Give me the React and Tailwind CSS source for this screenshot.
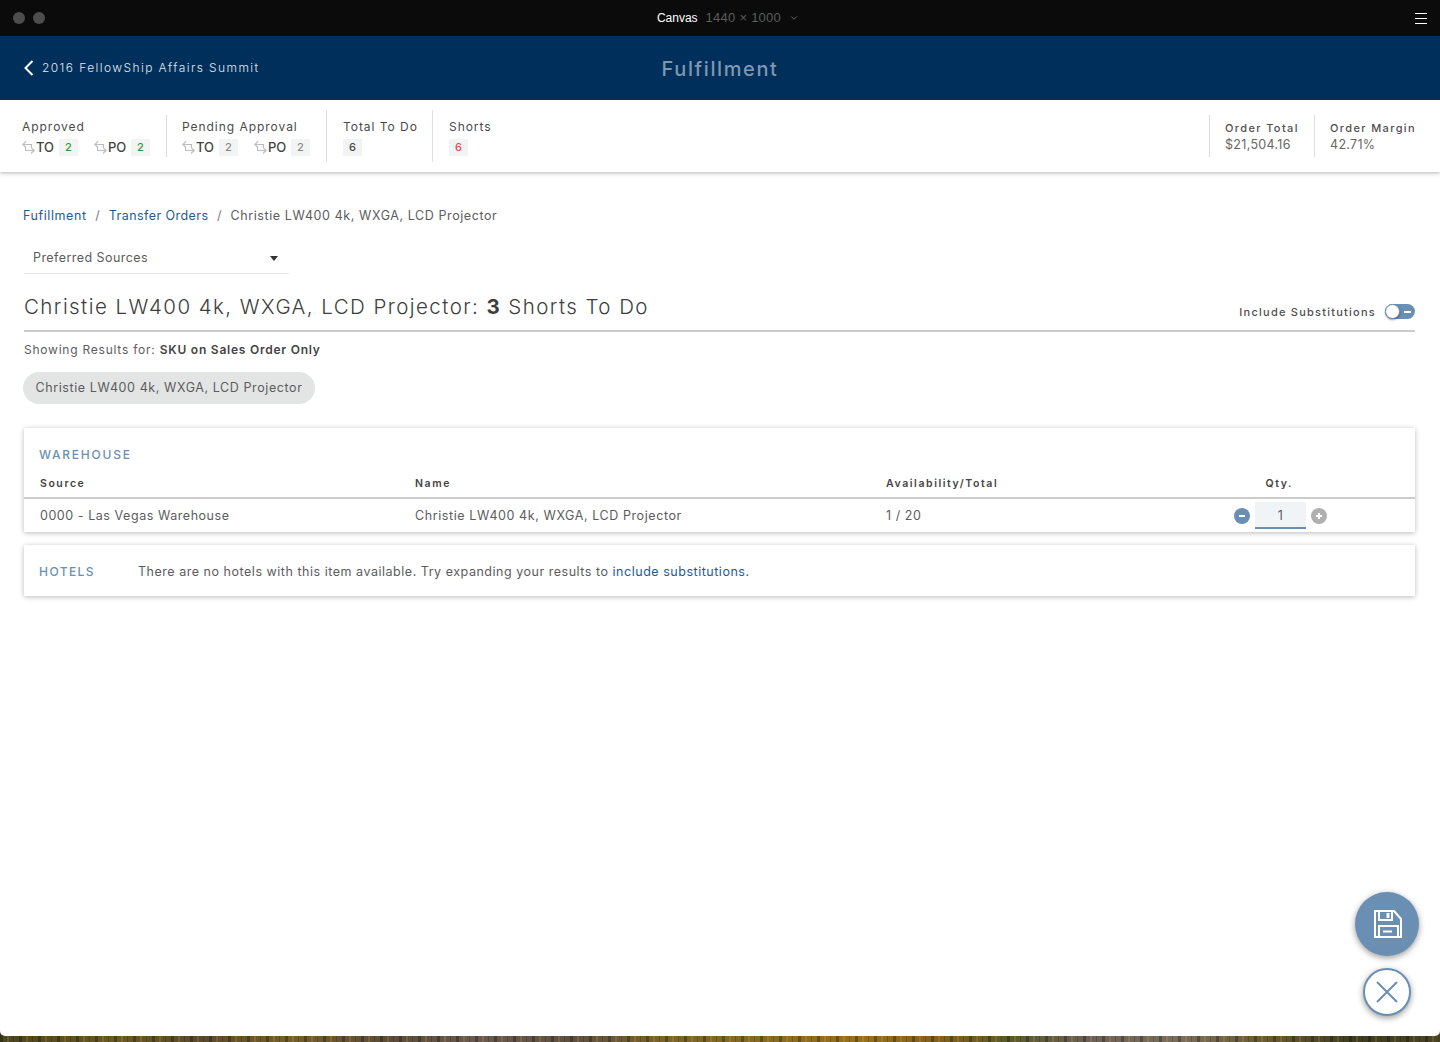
import { ChevronDown } from "lucide-react";

const FONT = "font-['Inter','Liberation_Sans',sans-serif]";

function SwapIcon() {
  return (
    <svg width="13" height="13" viewBox="0 0 13 13" fill="none" stroke="#bdbdbd" strokeWidth="1.2" className="shrink-0">
      <path d="M4 0.5 L0.8 3.5 L4 6.5 M0.8 3.5 H9.5 V6.5" />
      <path d="M9 6.5 L12.2 9.5 L9 12.5 M12.2 9.5 H3.5 V6.5" />
    </svg>
  );
}

function Count({ value, className }) {
  return (
    <span className={`flex h-[17px] w-[19px] items-center justify-center bg-[#f2f3f3] text-[11px] font-medium ${className}`}>
      {value}
    </span>
  );
}

function Transfer({ label, value, color }) {
  return (
    <div className="flex items-center">
      <SwapIcon />
      <span className="ml-px mr-[5px] w-[18px] text-[13px] font-medium text-[#444]">{label}</span>
      <Count value={value} className={color} />
    </div>
  );
}

function StatGroup({ title, children, className }) {
  return (
    <div className={`flex h-[52px] flex-col pt-[9px] ${className}`}>
      <div className="mb-1 text-[12px] font-normal leading-[16px] tracking-[0.08em] text-[#4a4a4a]">{title}</div>
      <div className="flex h-[17px] items-center">{children}</div>
    </div>
  );
}

function OrderStat({ title, value, className }) {
  return (
    <div className={`flex h-[42px] flex-col justify-center whitespace-nowrap border-l border-[#dedede] ${className}`}>
      <div className="text-[11px] font-medium leading-[16px] tracking-[0.125em] text-[#4f4f4f]">{title}</div>
      <div className="text-[12.5px] leading-[17px] tracking-[0.025em] text-[#666]">{value}</div>
    </div>
  );
}

function RoundButton({ bg, children }) {
  return (
    <span className={`flex h-4 w-4 items-center justify-center rounded-full ${bg}`}>
      <svg width="10" height="10" viewBox="0 0 10 10" stroke="#fff" strokeWidth="2">
        {children}
      </svg>
    </span>
  );
}

export default function App() {
  return (
    <div className={`relative h-[1042px] w-full overflow-hidden bg-[repeating-linear-gradient(90deg,rgba(0,0,0,0.28)_0_3px,transparent_3px_7px,rgba(255,210,120,0.14)_7px_9px,transparent_9px_13px,rgba(0,0,0,0.18)_13px_14px,transparent_14px_19px),linear-gradient(90deg,#4a4420,#6a5a24_8%,#5a4a2a_14%,#75602a_20%,#5c4c38_27%,#6a5a50_33%,#5e5040_40%,#7a6428_46%,#8a6c22_54%,#96701c_60%,#7e5e20_66%,#5a5a2a_70%,#6e6258_76%,#7a6e5c_82%,#6a5c30_88%,#3e3c20_94%,#4a4424_100%)] ${FONT}`}>
      <div className="flex h-[1036px] flex-col overflow-hidden rounded-b-[5px] bg-white">
        {/* title bar */}
        <div className="grid h-9 grid-cols-3 items-center bg-[#0b0b0b] px-[13px]">
          <div className="flex gap-2">
            <span className="h-3 w-3 rounded-full bg-[#4d4d4d]" />
            <span className="h-3 w-3 rounded-full bg-[#4d4d4d]" />
          </div>
          <div className="flex items-center justify-center pl-4 font-['Liberation_Sans',sans-serif] text-[12px]">
            <span className="font-normal text-white">Canvas</span>
            <span className="ml-2 text-[13px] tracking-[0.02em] text-[#5c5c5c]">1440 × 1000</span>
            <ChevronDown size={10} className="ml-2 text-[#777]" />
          </div>
          <div className="flex flex-col items-end gap-[4px]">
            <span className="h-px w-3 bg-white" />
            <span className="h-px w-3 bg-white" />
            <span className="h-px w-3 bg-white" />
          </div>
        </div>

        {/* app header */}
        <div className="grid h-16 grid-cols-3 items-center bg-[#002f5b] px-6">
          <div className="flex items-center pb-px">
            <svg width="10" height="16" viewBox="0 0 10 16" fill="none" stroke="#fff" strokeWidth="2">
              <path d="M8.5 1L1.5 8L8.5 15" />
            </svg>
            <span className="ml-2 whitespace-nowrap text-[12px] font-light tracking-[0.118em] text-[#e3e8ee]">2016 FellowShip Affairs Summit</span>
          </div>
          <div className="pt-[2px] text-center text-[20px] font-medium tracking-[0.08em] text-[#7f97b0]">Fulfillment</div>
        </div>

        {/* stats */}
        <div className="z-10 flex h-[72px] items-center justify-between bg-white pl-[22px] pr-[25px] shadow-[0_1px_4px_rgba(0,0,0,0.3)]">
          <div className="flex items-center">
            <StatGroup title="Approved" className="w-[144px]">
              <Transfer label="TO" value="2" color="text-[#2a9a36]" />
              <div className="ml-4"><Transfer label="PO" value="2" color="text-[#2a9a36]" /></div>
            </StatGroup>
            <div className="h-[42px] w-px bg-[#dedede]" />
            <StatGroup title="Pending Approval" className="ml-[15px] w-[144px]">
              <Transfer label="TO" value="2" color="text-[#888]" />
              <div className="ml-4"><Transfer label="PO" value="2" color="text-[#888]" /></div>
            </StatGroup>
            <div className="h-[52px] w-px bg-[#dedede]" />
            <StatGroup title="Total To Do" className="ml-4 w-[89px]">
              <Count value="6" className="text-[#444]" />
            </StatGroup>
            <div className="h-[52px] w-px bg-[#dedede]" />
            <StatGroup title="Shorts" className="ml-4">
              <Count value="6" className="text-[#e5475c]" />
            </StatGroup>
          </div>
          <div className="flex">
            <OrderStat title="Order Total" value="$21,504.16" className="w-[105px] pl-[15px]" />
            <OrderStat title="Order Margin" value="42.71%" className="w-[101px] pl-[15px]" />
          </div>
        </div>

        {/* content */}
        <div className="flex-1 pl-6 pr-[25px] pt-[35px]">
          <div className="-ml-px flex items-center text-[12.5px] leading-[17px] tracking-[0.047em] text-[#5c5c5c]">
            <span className="text-[#1d5c97]">Fufillment</span>
            <span className="mx-[8.5px] text-[#777]">/</span>
            <span className="tracking-[0.035em] text-[#1d5c97]">Transfer Orders</span>
            <span className="mx-[8.5px] text-[#777]">/</span>
            <span>Christie LW400 4k, WXGA, LCD Projector</span>
          </div>

          <div className="mt-[18px] flex h-[32px] w-[265px] items-center justify-between border-b border-[#e6e6e6] pl-[9px] pr-[11px] pt-px text-[12.5px] tracking-[0.035em] text-[#5c5c5c]">
            <span>Preferred Sources</span>
            <span className="h-0 w-0 border-x-[4.5px] border-t-[5px] border-x-transparent border-t-[#333]" />
          </div>

          <div className="mt-[19px] flex items-end justify-between border-b-2 border-[#cccccc] pb-[9px]">
            <h1 className="text-[20.5px] font-light leading-[28px] tracking-[0.07em] text-[#3d3d3d]">
              Christie LW400 4k, WXGA, LCD Projector: <span className="font-bold">3</span> Shorts To Do
            </h1>
            <div className="flex items-center pb-px">
              <span className="text-[11px] font-medium tracking-[0.113em] text-[#4f4f4f]">Include Substitutions</span>
              <span className="relative ml-[9px] flex h-[15px] w-[30px] items-center justify-end rounded-full bg-[#6a8fb3] pr-[4px]">
                <span className="h-[2px] w-[7px] bg-white" />
                <span className="absolute left-0 top-0 h-[15px] w-[15px] rounded-full border border-[#6a8fb3] bg-white shadow-[0_1px_2px_rgba(0,0,0,0.4)]" />
              </span>
            </div>
          </div>

          <div className="mt-[9px] text-[12px] leading-[17px] tracking-[0.064em] text-[#5c5c5c]">
            Showing Results for: <span className="font-semibold text-[#444]">SKU on Sales Order Only</span>
          </div>

          <div className="-ml-px mt-[14px] inline-flex h-8 w-[292px] items-center justify-center rounded-full bg-[#e3e5e5] text-[12.5px] tracking-[0.047em] text-[#5c5c5c]">
            Christie LW400 4k, WXGA, LCD Projector
          </div>

          {/* warehouse card */}
          <div className="mt-6 h-[104px] bg-white shadow-[0_1px_5px_rgba(0,0,0,0.28)]">
            <div className="pl-[15px] pt-[19px] text-[12px] font-medium leading-[16px] tracking-[0.147em] text-[#6a8fb3]">WAREHOUSE</div>
            <div className="mt-[9px] grid h-[27px] grid-cols-[375px_471px_1fr] items-center border-b-2 border-[#cccccc] pb-px pl-4 text-[10.5px] font-semibold tracking-[0.15em] text-[#444]">
              <span>Source</span>
              <span>Name</span>
              <div className="flex justify-between pr-[122px]">
                <span>Availability/Total</span>
                <span>Qty.</span>
              </div>
            </div>
            <div className="grid h-[33px] grid-cols-[375px_471px_344px_1fr] items-center pl-4 text-[12.5px] tracking-[0.044em] text-[#5c5c5c]">
              <span className="pt-[2px]">0000 - Las Vegas Warehouse</span>
              <span className="pt-[2px] tracking-[0.047em]">Christie LW400 4k, WXGA, LCD Projector</span>
              <span className="pt-[2px]">1 / 20</span>
              <div className="ml-1 flex items-center">
                <RoundButton bg="bg-[#6a8fb3]">
                  <path d="M2 5H8" />
                </RoundButton>
                <span className="mx-[5px] flex h-[27px] w-[51px] items-center justify-center border-b-2 border-[#6a8fb3] bg-[#f1f4f7] pt-[3px]">1</span>
                <RoundButton bg="bg-[#b0b0b0]">
                  <path d="M2 5H8M5 2V8" />
                </RoundButton>
              </div>
            </div>
          </div>

          {/* hotels card */}
          <div className="mt-[13px] flex h-[51px] items-center bg-white pl-[15px] pt-[3px] text-[12.5px] tracking-[0.042em] text-[#5c5c5c] shadow-[0_1px_5px_rgba(0,0,0,0.28)]">
            <span className="w-[99px] text-[12px] font-medium tracking-[0.12em] text-[#6a8fb3]">HOTELS</span>
            <span>
              There are no hotels with this item available. Try expanding your results to{" "}
              <span className="text-[#1d5c97]">include substitutions</span>.
            </span>
          </div>
        </div>
      </div>

      {/* floating actions */}
      <button className="absolute left-[1355px] top-[892px] flex h-16 w-16 items-center justify-center rounded-full bg-[#6a8fb3] shadow-[0_2px_6px_rgba(0,0,0,0.4)]">
        <svg width="28" height="28" viewBox="0 0 28 28" fill="none" stroke="#fff" strokeWidth="2" className="ml-[2px]">
          <path d="M1 1H20L27 9V27H1Z" />
          <path d="M5 1V10H18V1" />
          <path d="M14 3V8" strokeWidth="3" />
          <path d="M5 27V16H24V27" />
          <path d="M9 21.5H18" />
        </svg>
      </button>
      <button className="absolute left-[1363px] top-[968px] flex h-12 w-12 items-center justify-center rounded-full border-2 border-[#6a8fb3] bg-white shadow-[0_2px_6px_rgba(0,0,0,0.4)]">
        <svg width="22" height="22" viewBox="0 0 22 22" fill="none" stroke="#6a8fb3" strokeWidth="2">
          <path d="M1 1L21 21M21 1L1 21" />
        </svg>
      </button>
    </div>
  );
}
